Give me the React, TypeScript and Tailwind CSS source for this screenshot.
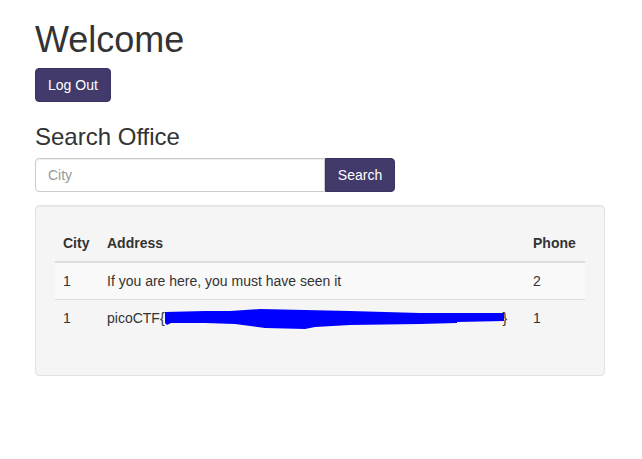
export default function App() {
  return (
    <div className="min-h-[459px] bg-white pl-[35px] pr-[37px] pt-[20px] text-[14px] leading-[20px] text-[#333] font-['Liberation_Sans',Arial,sans-serif]">
      <h1 className="text-[36px] leading-[39.6px] font-normal mb-[8px]">Welcome</h1>
      <button className="h-[34px] px-[12px] rounded-[4px] bg-[#423a6b] border border-[#3a3260] text-white text-[14px]">
        Log Out
      </button>
      <h3 className="text-[24px] leading-[26.4px] font-normal mt-[22px] mb-[8px]">Search Office</h3>
      <div className="flex w-[360px] h-[34px]">
        <input
          placeholder="City"
          className="w-[290px] h-[34px] px-[12px] border border-[#ccc] rounded-l-[4px] bg-white text-[14px] placeholder:text-[#999] shadow-[inset_0_1px_1px_rgba(0,0,0,0.075)] outline-none"
        />
        <button className="w-[70px] h-[34px] rounded-r-[4px] bg-[#423a6b] border border-[#3a3260] text-white text-[14px]">
          Search
        </button>
      </div>
      <div className="mt-[13px] bg-[#f5f5f5] border border-[#e3e3e3] rounded-[4px] p-[19px] shadow-[inset_0_1px_1px_rgba(0,0,0,0.05)]">
        <table className="w-full table-fixed border-collapse mb-[20px]">
          <thead>
            <tr>
              <th className="w-[44px] p-[8px] text-left font-bold border-b-2 border-[#ddd]">City</th>
              <th className="p-[8px] text-left font-bold border-b-2 border-[#ddd]">Address</th>
              <th className="w-[60px] p-[8px] text-left font-bold border-b-2 border-[#ddd]">Phone</th>
            </tr>
          </thead>
          <tbody>
            <tr className="bg-[#f9f9f9]">
              <td className="p-[8px] border-t border-[#ddd]">1</td>
              <td className="p-[8px] border-t border-[#ddd]">If you are here, you must have seen it</td>
              <td className="p-[8px] border-t border-[#ddd]">2</td>
            </tr>
            <tr>
              <td className="p-[8px] border-t border-[#ddd]">1</td>
              <td className="p-[8px] border-t border-[#ddd] whitespace-nowrap">
                picoCTF{"{"}
                <span className="relative inline-block w-[338px] h-[20px] align-top">
                  <svg className="absolute left-0 top-0 overflow-visible" width="338" height="20" viewBox="0 0 338 20">
                    <path
                      d="M0 4 L40 3 L65 3 L95 1 L140 2 L185 3 L255 5 L300 5 L339 5 L339 13 L292 14 L292 15 L255 16 L185 17 L150 19 L140 21 L100 20 L70 16 L40 15 L6 15 L2 17 L0 15 Z"
                      fill="#0000ff"
                    />
                  </svg>
                </span>
                {"}"}
              </td>
              <td className="p-[8px] border-t border-[#ddd]">1</td>
            </tr>
          </tbody>
        </table>
      </div>
    </div>
  );
}
